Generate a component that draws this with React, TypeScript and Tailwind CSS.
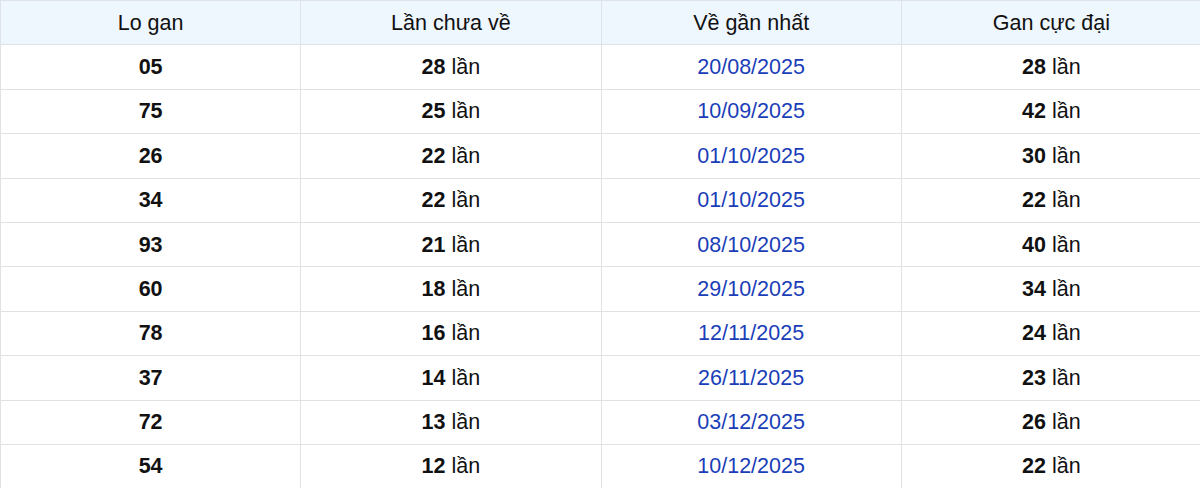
import React from 'react';

const ROWS = [
  { lo: '05', count: 28, last: '20/08/2025', max: 28 },
  { lo: '75', count: 25, last: '10/09/2025', max: 42 },
  { lo: '26', count: 22, last: '01/10/2025', max: 30 },
  { lo: '34', count: 22, last: '01/10/2025', max: 22 },
  { lo: '93', count: 21, last: '08/10/2025', max: 40 },
  { lo: '60', count: 18, last: '29/10/2025', max: 34 },
  { lo: '78', count: 16, last: '12/11/2025', max: 24 },
  { lo: '37', count: 14, last: '26/11/2025', max: 23 },
  { lo: '72', count: 13, last: '03/12/2025', max: 26 },
  { lo: '54', count: 12, last: '10/12/2025', max: 22 },
];

export default function App() {
  return (
    <div className="w-[1200px] overflow-hidden bg-white font-['Liberation_Sans',Arial,sans-serif] text-[21.5px] text-[#111]">
      <table className="w-[1202px] table-fixed border-collapse">
        <thead>
          <tr className="h-[44.4px] bg-[#eef6fe]">
            <th className="border border-[#dfe3e8] font-normal">Lo gan</th>
            <th className="border border-[#dfe3e8] font-normal">Lần chưa về</th>
            <th className="border border-[#dfe3e8] font-normal">Về gần nhất</th>
            <th className="border border-[#dfe3e8] font-normal">Gan cực đại</th>
          </tr>
        </thead>
        <tbody>
          {ROWS.map((r) => (
            <tr key={r.lo} className="h-[44.4px]">
              <td className="border border-[#e2e2e2] text-center font-bold">{r.lo}</td>
              <td className="border border-[#e2e2e2] text-center">
                <span className="font-bold">{r.count}</span> lần
              </td>
              <td className="border border-[#e2e2e2] text-center text-[#1a3db8]">{r.last}</td>
              <td className="border border-[#e2e2e2] text-center">
                <span className="font-bold">{r.max}</span> lần
              </td>
            </tr>
          ))}
        </tbody>
      </table>
    </div>
  );
}
